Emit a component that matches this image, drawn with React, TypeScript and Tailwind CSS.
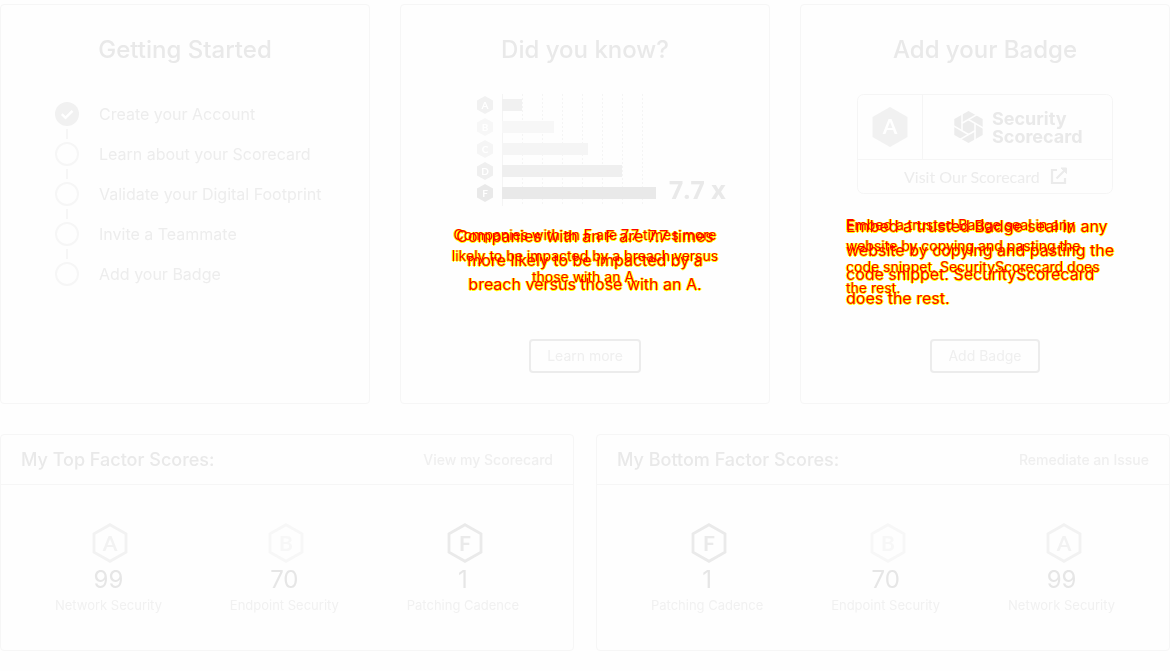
import type { ReactNode } from "react";

const steps = [
  "Create your Account",
  "Learn about your Scorecard",
  "Validate your Digital Footprint",
  "Invite a Teammate",
  "Add your Badge",
];

const bars = [
  { grade: "A", width: 20, fill: "#f1f1f1" },
  { grade: "B", width: 52, fill: "#f7f7f7" },
  { grade: "C", width: 86, fill: "#f5f5f5" },
  { grade: "D", width: 120, fill: "#efefef" },
  { grade: "F", width: 154, fill: "#e9e9e9" },
];

const gradeColors: Record<string, string> = { A: "#f2f2f2", B: "#f7f7f7", F: "#eaeaea" };

type Factor = { grade: string; score: number; name: string };

const topFactors: Factor[] = [
  { grade: "A", score: 99, name: "Network Security" },
  { grade: "B", score: 70, name: "Endpoint Security" },
  { grade: "F", score: 1, name: "Patching Cadence" },
];

const bottomFactors: Factor[] = [topFactors[2], topFactors[1], topFactors[0]];

function Card({ title, children }: { title: string; children: ReactNode }) {
  return (
    <section className="flex min-h-[400px] flex-col items-center rounded-[4px] border border-[#f6f6f6] px-[45px] pt-[29px] pb-[30px]">
      <h2 className="text-2xl font-medium text-[#e9e9e9]">{title}</h2>
      {children}
    </section>
  );
}

function CheckList() {
  return (
    <ol className="mt-9 w-full pl-[9px]">
      {steps.map((step, i) => (
        <li key={step} className="flex gap-5 text-base text-[#ededed]">
          <span className="flex flex-col items-center">
            {i === 0 ? (
              <svg width="24" height="24" viewBox="0 0 24 24" aria-hidden="true">
                <circle cx="12" cy="12" r="12" fill="#f1f1f1" />
                <path d="M6.8 12.2l3.7 3.6 7-7" fill="none" stroke="#fff" strokeWidth="2.4" />
              </svg>
            ) : (
              <span className="size-6 rounded-full border-2 border-[#f6f6f6]" />
            )}
            {i < steps.length - 1 && <span className="my-[3px] h-[10px] w-[2px] bg-[#f6f6f6]" />}
          </span>
          <span>{step}</span>
        </li>
      ))}
    </ol>
  );
}

function BreachChart() {
  return (
    <svg className="mt-7 ml-[34px] shrink-0" width="250" height="112" viewBox="0 0 250 112" role="img" aria-label="Breach likelihood by grade">
      {[45, 65, 85, 105, 125, 145, 165].map((x) => (
        <path key={x} d={`M${x + 0.5} 0V112`} stroke="#f4f4f4" strokeDasharray="2 2" />
      ))}
      <path d="M25.5 0V112" stroke="#f4f4f4" />
      {bars.map((b, i) => (
        <g key={b.grade} fill={b.fill}>
          <rect x="25" y={5 + i * 22} width={b.width} height="12" />
          <path d="M8 0l8 4.5v9L8 18l-8-4.5v-9z" transform={`translate(0 ${2 + i * 22})`} />
          <text x="8" y={14.5 + i * 22} textAnchor="middle" className="font-['Lato'] text-[10px] font-bold" fill="#fff">
            {b.grade}
          </text>
        </g>
      ))}
      <text x="192" y="105" className="font-['Open_Sans'] text-[25px] font-bold" fill="#e9e9e9">
        7.7 x
      </text>
    </svg>
  );
}

function BadgePreview() {
  return (
    <svg className="mt-7 shrink-0" width="256" height="100" viewBox="0 0 256 100" role="img" aria-label="SecurityScorecard badge">
      <rect x="0.5" y="0.5" width="255" height="99" rx="6" fill="none" stroke="#f5f5f5" />
      <path d="M0 65.5H256M65.5 0V65" stroke="#f5f5f5" />
      <path d="M33 13l17.5 10v20L33 53 15.500 43V23z" fill="#f1f1f1" />
      <text x="33" y="40" textAnchor="middle" className="font-['Lato'] text-[21px] font-bold" fill="#fff">
        A
      </text>
      <g transform="translate(111.5 33)">
        <path d="M0-16l14.200 8v16L0 16l-14.200-8V-8z" fill="#ececec" />
        {[0, 60, 120, 180, 240, 300].map((a) => (
          <path key={a} d="M-6.5 3.8V-14" stroke="#fefefe" strokeWidth="1.6" transform={`rotate(${a})`} />
        ))}
      </g>
      <g className="font-['Inter'] text-[18px] font-bold" fill="#e9e9e9">
        <text x="135" y="31">Security</text>
        <text x="135" y="49">Scorecard</text>
      </g>
      <text x="47" y="89" className="font-['Lato'] text-[16px]" fill="#ececec">
        Visit Our Scorecard
      </text>
      <g fill="none" stroke="#ebebeb" strokeWidth="2.2">
        <path d="M200 76h-5v13h13v-5" />
        <path d="M199.500 84.500l8-8" />
        <path d="M204 74h5.500v5.500z" fill="#ebebeb" strokeWidth="1" />
      </g>
    </svg>
  );
}

function OverlaidText({ text }: { text: string }) {
  return (
    <div className="grid text-[#ff0000] [text-shadow:1px_0_#ff0,-1px_0_#ff0,0_1px_#ff0]">
      <p className="col-start-1 row-start-1 text-sm leading-[21px] mix-blend-multiply">{text}</p>
      <p className="col-start-1 row-start-1 text-base leading-6 mix-blend-multiply" aria-hidden="true">
        {text}
      </p>
    </div>
  );
}

function CardButton({ children }: { children: ReactNode }) {
  return (
    <button type="button" className="mt-auto h-[34px] rounded-[4px] border-2 border-[#ececec] px-4 text-sm text-[#efefef]">
      {children}
    </button>
  );
}

function GradeHexagon({ grade }: { grade: string }) {
  const color = gradeColors[grade];
  return (
    <svg className="ml-1" width="36" height="40" viewBox="0 0 36 40" role="img" aria-label={`Grade ${grade}`}>
      <path d="M18 1.700l16 9.100v18.400L18 38.300 2 29.200V10.800z" fill="none" stroke={color} strokeWidth="2.8" />
      <text x="18" y="27.5" textAnchor="middle" className="font-['Lato'] text-[21px] font-bold" fill={color}>
        {grade}
      </text>
    </svg>
  );
}

function FactorPanel({ title, link, factors }: { title: string; link: string; factors: Factor[] }) {
  return (
    <section className="rounded-[4px] border border-[#f6f6f6]">
      <header className="flex items-center justify-between border-b border-[#f6f6f6] px-5 py-3">
        <h2 className="text-lg leading-[25px] font-medium text-[#e9e9e9]">{title}</h2>
        <a href="#" className="text-sm font-medium text-[#efefef]">
          {link}
        </a>
      </header>
      <ul className="flex justify-around px-5 pt-[38px] pb-[37px]">
        {factors.map((f) => (
          <li key={f.name} className="flex flex-col items-center">
            <GradeHexagon grade={f.grade} />
            <span className="text-2xl leading-[34px] text-[#e6e6e6]">{f.score}</span>
            <span className="text-[13px] leading-4 text-[#f1f1f1]">{f.name}</span>
          </li>
        ))}
      </ul>
    </section>
  );
}

export default function App() {
  return (
    <main className="min-h-screen bg-[#fefefe] pt-1 font-['Inter',sans-serif]">
      <div className="grid grid-cols-3 gap-[30px]">
        <Card title="Getting Started">
          <CheckList />
        </Card>
        <Card title="Did you know?">
          <BreachChart />
          <div className="mt-[18px] text-center">
            <OverlaidText text="Companies with an F are 7.7 times more likely to be impacted by a breach versus those with an A." />
          </div>
          <CardButton>Learn more</CardButton>
        </Card>
        <Card title="Add your Badge">
          <BadgePreview />
          <div className="mt-5 w-full pr-2">
            <OverlaidText text="Embed a trusted Badge seal in any website by copying and pasting the code snippet. SecurityScorecard does the rest." />
          </div>
          <CardButton>Add Badge</CardButton>
        </Card>
      </div>
      <div className="mt-[30px] grid grid-cols-2 gap-[22px]">
        <FactorPanel title="My Top Factor Scores:" link="View my Scorecard" factors={topFactors} />
        <FactorPanel title="My Bottom Factor Scores:" link="Remediate an Issue" factors={bottomFactors} />
      </div>
    </main>
  );
}
